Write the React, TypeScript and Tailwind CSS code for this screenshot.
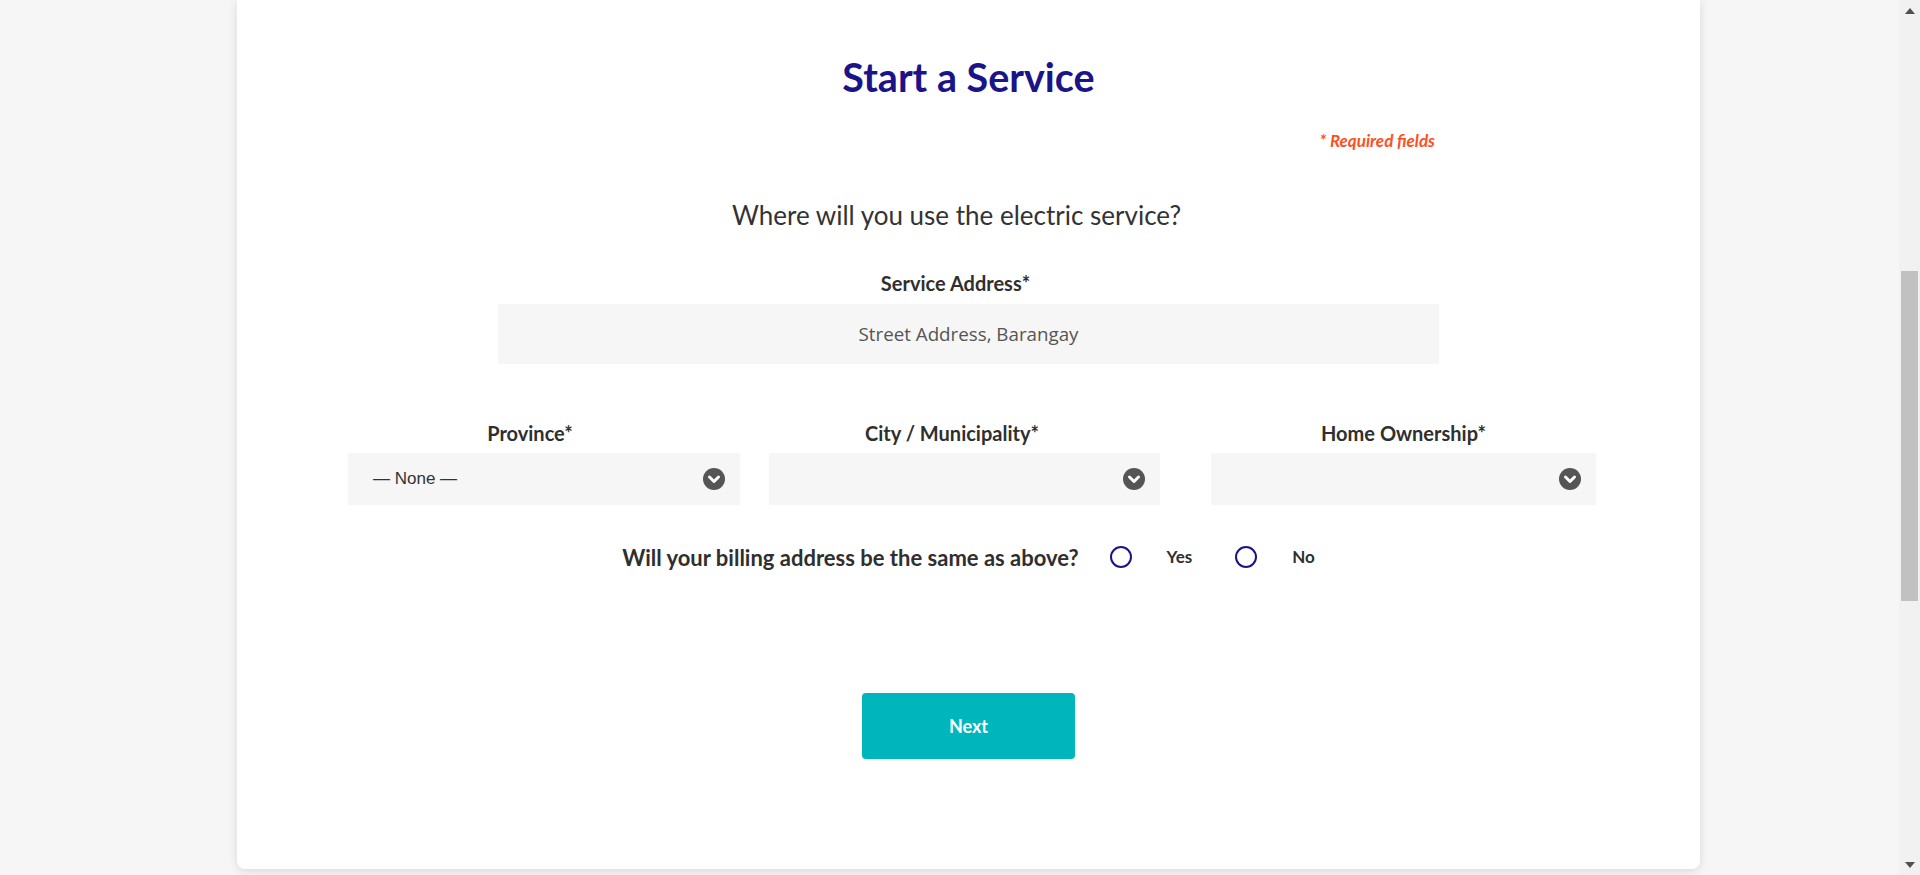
import React, { useState } from 'react';

const SelectArrow: React.FC = () => (
  <svg width="22" height="22" viewBox="0 0 22 22" className="shrink-0">
    <circle cx="11" cy="11" r="11" fill="#555555" />
    <polyline
      points="6.5,9 11,13.5 15.5,9"
      fill="none"
      stroke="#ffffff"
      strokeWidth="3"
      strokeLinecap="round"
      strokeLinejoin="round"
    />
  </svg>
);

interface SelectFieldProps {
  label: string;
  width: string;
  labelShift?: string;
  value?: string;
}

const SelectField: React.FC<SelectFieldProps> = ({ label, width, labelShift = '', value }) => (
  <div className={`flex flex-col ${width}`}>
    <div className={`text-center text-[20px] leading-[24px] font-bold text-[#2f2f2f] ${labelShift}`}>
      {label}
    </div>
    <div className="mt-[8px] h-[52px] bg-[#f6f6f6] flex items-center justify-between pl-[25px] pr-[15px]">
      <span className="text-[17px] text-[#333333] font-['Liberation_Sans',Arial,sans-serif]">
        {value ?? ''}
      </span>
      <SelectArrow />
    </div>
  </div>
);

const Radio: React.FC<{ checked: boolean; onClick: () => void }> = ({ checked, onClick }) => (
  <button
    type="button"
    onClick={onClick}
    className="w-[22px] h-[22px] rounded-full border-2 border-[#1b1488] flex items-center justify-center"
  >
    {checked && <span className="w-[10px] h-[10px] rounded-full bg-[#1b1488]" />}
  </button>
);

export default function App() {
  const [billingSame, setBillingSame] = useState<'yes' | 'no' | null>(null);

  return (
    <div className="h-screen overflow-hidden flex bg-[#f6f6f6] font-['Lato','Noto_Sans',sans-serif]">
      {/* Page */}
      <div className="flex-1 h-[875px]">
        <div className="ml-[237px] w-[1463px] h-[869px] bg-white rounded-b-[8px] shadow-[0_2px_10px_rgba(0,0,0,0.12)] flex flex-col">
          <h1 className="pt-[53px] text-center text-[39.5px] leading-[48px] font-bold text-[#1b1488]">
            Start a Service
          </h1>

          <div className="mt-[30px] pr-[265px] text-right text-[17px] leading-[20px] italic font-bold text-[#ff4f1f]">
            * Required fields
          </div>

          <p className="mt-[48px] pr-[24px] text-center text-[26px] leading-[32px] text-[#333333]">
            Where will you use the electric service?
          </p>

          {/* Service address */}
          <div className="mt-[40px] flex flex-col items-center">
            <div className="pr-[26px] text-[20px] leading-[24px] font-bold text-[#2f2f2f]">Service Address*</div>
            <div className="mt-[9px] w-[941px] h-[60px] bg-[#f6f6f6] flex items-center justify-center">
              <span className="text-[18.75px] text-[#555555] font-['Open_Sans',sans-serif]">
                Street Address, Barangay
              </span>
            </div>
          </div>

          {/* Selects */}
          <div className="mt-[57px] pl-[111px] flex">
            <SelectField label="Province*" width="w-[392px]" labelShift="pr-[28px]" value="— None —" />
            <div className="ml-[29px]">
              <SelectField label="City / Municipality*" width="w-[391px]" labelShift="pr-[25px]" />
            </div>
            <div className="ml-[51px]">
              <SelectField label="Home Ownership*" width="w-[385px]" />
            </div>
          </div>

          {/* Billing radio row */}
          <div className="mt-[40px] h-[24px] flex items-center justify-center">
            <span className="text-[22px] font-bold text-[#2f2f2f]">
              Will your billing address be the same as above?
            </span>
            <div className="ml-[31px] flex items-center">
              <Radio checked={billingSame === 'yes'} onClick={() => setBillingSame('yes')} />
              <span className="ml-[35px] text-[17px] font-bold text-[#2f2f2f]">Yes</span>
            </div>
            <div className="ml-[43px] flex items-center">
              <Radio checked={billingSame === 'no'} onClick={() => setBillingSame('no')} />
              <span className="ml-[35px] text-[17px] font-bold text-[#2f2f2f]">No</span>
            </div>
          </div>

          {/* Next */}
          <div className="mt-[124px] flex justify-center">
            <button
              type="button"
              className="w-[213px] h-[66px] rounded-[4px] bg-[#00b6bd] text-white text-[18px] font-bold"
            >
              Next
            </button>
          </div>
        </div>
      </div>

      {/* Scrollbar */}
      <div className="w-[21px] h-[875px] bg-[#f1f1f1] flex flex-col items-center">
        <div className="h-[21px] flex items-center justify-center">
          <svg width="10" height="6" viewBox="0 0 10 6">
            <polygon points="5,0 10,6 0,6" fill="#505050" />
          </svg>
        </div>
        <div className="mt-[250px] w-[17px] h-[330px] bg-[#c1c1c1]" />
        <div className="flex-1" />
        <div className="h-[21px] flex items-center justify-center">
          <svg width="10" height="6" viewBox="0 0 10 6">
            <polygon points="0,0 10,0 5,6" fill="#505050" />
          </svg>
        </div>
      </div>
    </div>
  );
}
